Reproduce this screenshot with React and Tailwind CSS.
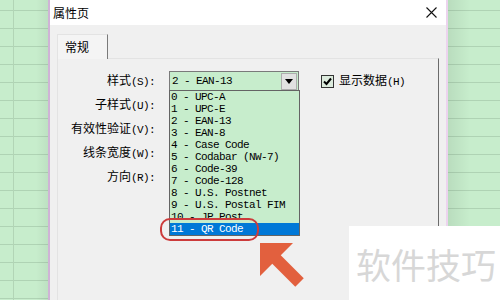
import React from 'react';

const items = [
  '0 - UPC-A',
  '1 - UPC-E',
  '2 - EAN-13',
  '3 - EAN-8',
  '4 - Case Code',
  '5 - Codabar (NW-7)',
  '6 - Code-39',
  '7 - Code-128',
  '8 - U.S. Postnet',
  '9 - U.S. Postal FIM',
  '10 - JP Post',
  '11 - QR Code',
];

const labels = [
  ['样式', '(S):'],
  ['子样式', '(U):'],
  ['有效性验证', '(V):'],
  ['线条宽度', '(W):'],
  ['方向', '(R):'],
];

const mono = "font-['Liberation_Mono',monospace] text-[11px] tracking-[-0.6px]";

const SheetGrid = ({ className }) => (
  <div
    className={`shrink-0 bg-[image:repeating-linear-gradient(to_bottom,transparent_0,transparent_10px,#afd3b4_10px,#afd3b4_11px,transparent_11px,transparent_18px)] ${className}`}
  />
);

const ComboBox = () => (
  <div className="relative flex h-[20px] w-[130px] items-center border border-[#7a7a7a] bg-[#c7edcc]">
    <span className={`flex-1 pl-[2px] text-black ${mono}`}>2 - EAN-13</span>
    <div className="mr-px flex h-[17px] w-[16px] items-center justify-center border border-[#adadad] bg-[#e1e1e1]">
      <svg width="8" height="5" viewBox="0 0 8 5">
        <path d="M0 0 L8 0 L4 5 Z" fill="#000" />
      </svg>
    </div>

    {/* open dropdown list */}
    <div className="absolute left-[-1px] top-[18px] z-10 w-[131px] border border-[#646464] bg-[#c7edcc]">
      {items.map((item, i) => (
        <div
          key={item}
          className={`h-[12px] whitespace-pre pl-[1px] leading-[12px] ${mono} ${
            i === items.length - 1 ? 'bg-[#0078d7] text-white' : 'text-black'
          }`}
        >
          {item}
        </div>
      ))}
    </div>
  </div>
);

export default function App() {
  return (
    <div className="relative flex h-[300px] w-[500px] overflow-hidden bg-[#c7edcc] font-['Noto_Sans_CJK_SC',sans-serif]">
      {/* spreadsheet behind, left */}
      <div className="relative w-[48px] shrink-0">
        <SheetGrid className="h-full w-full" />
        <div className="absolute left-[13px] top-0 h-full w-px bg-[#b2d5b6]" />
        <div className="absolute right-0 top-0 h-full w-[12px] bg-[linear-gradient(to_right,transparent,rgba(0,0,0,0.05))]" />
      </div>

      {/* dialog */}
      <div className="flex w-[400px] shrink-0 flex-col border-x-2 border-l-[#cfb3d6] border-r-[#ecd3ee] bg-[#f0f0f0]">
        <div className="flex h-[25px] items-center justify-between bg-white pl-[3px] pr-[9px]">
          <span className="text-[12px] text-black">属性页</span>
          <svg width="11" height="11" viewBox="0 0 11 11">
            <path d="M0.5 0.5 L10.5 10.5 M10.5 0.5 L0.5 10.5" stroke="#111" strokeWidth="1.1" />
          </svg>
        </div>

        <div className="flex flex-1 flex-col px-[7px] pt-[9px]">
          <div className="flex">
            <div className="relative z-[1] -mb-px flex h-[25px] w-[51px] items-center border-l border-t border-r border-l-[#e3e3e3] border-t-[#e3e3e3] border-r-[#7a7a7a] bg-[#f4f4f4] pl-[7px] text-[12px] text-black">
              常规
            </div>
          </div>

          <div className="flex flex-1 flex-col gap-[4px] border-l border-t border-r border-l-[#e3e3e3] border-t-[#e3e3e3] border-r-[#6b6b6b] bg-[#f0f0f0] pt-[12px]">
            {labels.map(([cjk, key], i) => (
              <div key={cjk} className="flex h-[20px] items-center">
                <span className="w-[97px] text-right text-[12px] text-black">
                  {cjk}
                  <span className={mono}>{key}</span>
                </span>
                {i === 0 && (
                  <>
                    <div className="ml-[14px]">
                      <ComboBox />
                    </div>
                    <div className="ml-[22px] flex h-[13px] w-[13px] items-center justify-center border border-[#333] bg-[#dcebdd]">
                      <svg width="11" height="11" viewBox="0 0 11 11">
                        <path d="M2 5.5 L4.5 8 L9 2.5" stroke="#000" strokeWidth="2" fill="none" />
                      </svg>
                    </div>
                    <span className="ml-[5px] text-[12px] text-black">
                      显示数据<span className={mono}>(H)</span>
                    </span>
                  </>
                )}
              </div>
            ))}
          </div>
        </div>
      </div>

      {/* spreadsheet behind, right */}
      <div className="relative flex-1">
        <SheetGrid className="h-full w-full" />
        <div className="absolute left-0 top-0 h-full w-[22px] bg-[linear-gradient(to_right,rgba(0,0,0,0.07),transparent)]" />
      </div>

      {/* annotation: red ring */}
      <div className="absolute left-[160px] top-[218px] z-20 h-[23px] w-[99px] rounded-[10px] border-[2.5px] border-[#cc3b3b]" />

      {/* annotation: arrow */}
      <svg className="pointer-events-none absolute left-0 top-0 z-20" width="500" height="300" viewBox="0 0 500 300">
        <polygon
          points="260,243 293,243 280.75,255.25 303.75,278.25 295.25,286.75 272.25,263.75 260,276"
          fill="#e2603e"
        />
      </svg>

      {/* watermark */}
      <div className="absolute left-[349px] top-[226px] z-30 flex h-[74px] w-[151px] items-center bg-white pl-[7px]">
        <span className="text-[35px] leading-none text-[#d7d7d7]">软件技巧</span>
      </div>
    </div>
  );
}
